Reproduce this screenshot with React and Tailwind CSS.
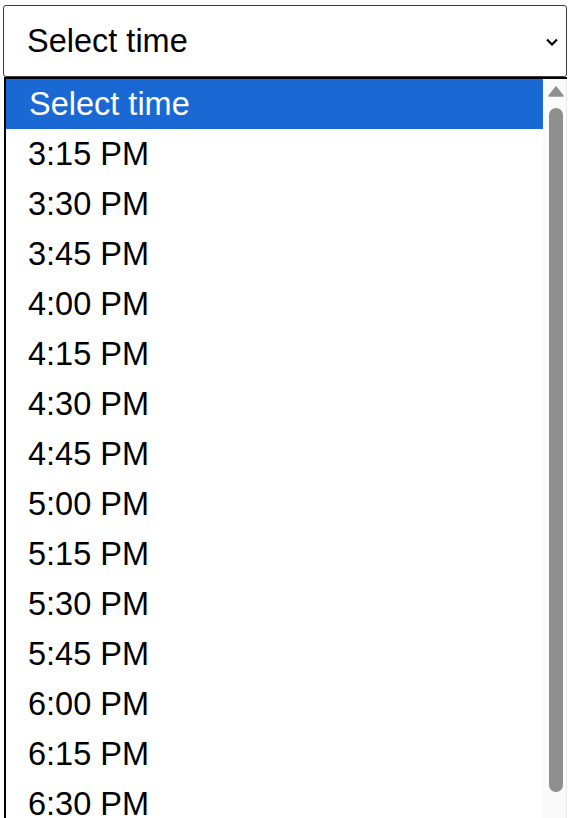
import React from "react";

const times = [
  "3:15 PM",
  "3:30 PM",
  "3:45 PM",
  "4:00 PM",
  "4:15 PM",
  "4:30 PM",
  "4:45 PM",
  "5:00 PM",
  "5:15 PM",
  "5:30 PM",
  "5:45 PM",
  "6:00 PM",
  "6:15 PM",
  "6:30 PM",
];

function App() {
  return (
    <div className="h-[818px] overflow-hidden bg-white font-['Liberation_Sans',Arial,sans-serif] text-black">
      <div className="ml-[3px] pt-[5px] w-[564px]">
        <div className="flex items-center justify-between h-[72px] border border-[#3b3b3b] rounded-[3px] pl-[23px] pr-[7px]">
          <span className="text-[32.5px] leading-none">Select time</span>
          <svg width="14" height="10" viewBox="0 0 14 10" className="mt-[2px]">
            <path d="M2 2.5 L7 7.5 L12 2.5" fill="none" stroke="#000" strokeWidth="2.2" />
          </svg>
        </div>
        <div className="flex ml-px border-l-2 border-t-2 border-black h-[760px]">
          <ul className="flex-1">
            <li className="h-[50px] flex items-center pl-[23px] bg-[#1a68d4] text-white text-[32.5px]">
              Select time
            </li>
            {times.map((t) => (
              <li key={t} className="h-[50px] flex items-center pl-[22px] text-[32.5px]">
                {t}
              </li>
            ))}
          </ul>
          <div className="w-[24px] bg-[#fafafa] border-r border-[#ececec] flex flex-col items-center">
            <svg width="16" height="11" viewBox="0 0 16 11" className="mt-[7px] ml-[2px]">
              <path d="M8 1 L15 10 L1 10 Z" fill="#8f8f8f" stroke="#8f8f8f" strokeLinejoin="round" strokeWidth="1.5" />
            </svg>
            <div className="mt-[11px] ml-[2px] w-[14px] h-[684px] rounded-full bg-[#8f8f8f]" />
          </div>
        </div>
      </div>
    </div>
  );
}

export default App;
